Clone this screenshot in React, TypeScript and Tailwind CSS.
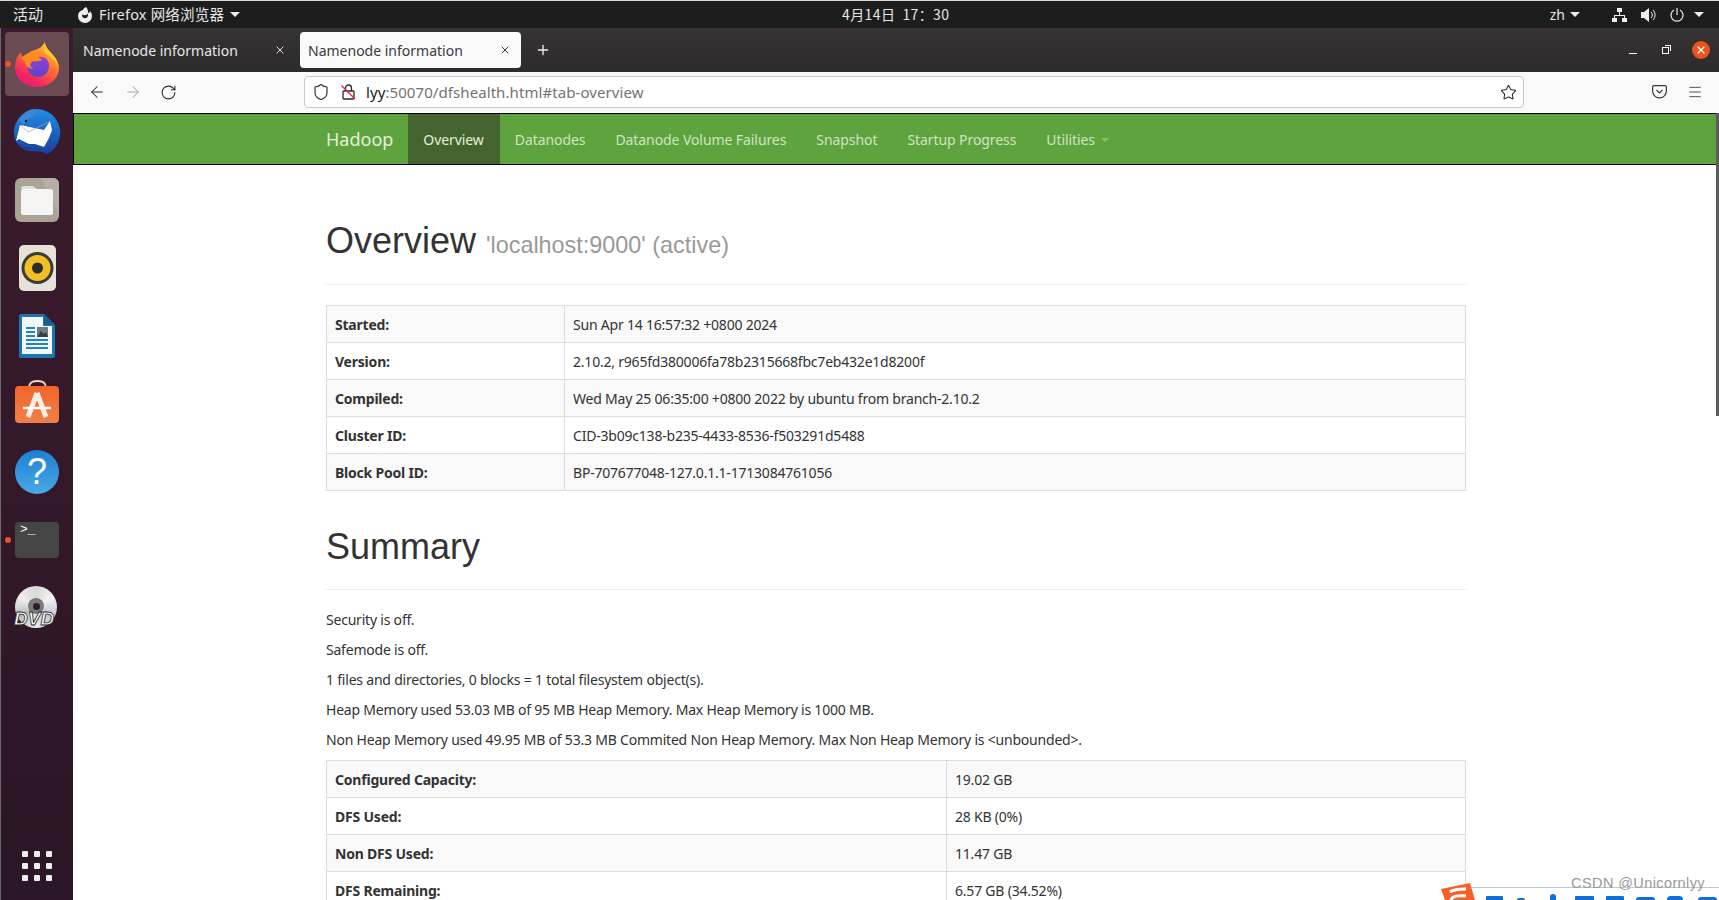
import { ArrowLeft, ArrowRight, Menu, Plus, RotateCw, Shield, Star, X } from "lucide-react";

const BODY_FONT = "font-['Noto_Sans','Noto_Sans_CJK_SC',sans-serif]";

function FirefoxIcon() {
  return (
    <svg width="44" height="46" viewBox="0 0 44 46">
      <defs>
        <linearGradient id="ffBody" x1="0.8" y1="0" x2="0.2" y2="1">
          <stop offset="0" stopColor="#ffd53a" />
          <stop offset="0.4" stopColor="#ff7a2b" />
          <stop offset="0.8" stopColor="#f5245f" />
          <stop offset="1" stopColor="#d81f86" />
        </linearGradient>
        <linearGradient id="ffBall" x1="0.5" y1="0" x2="0.5" y2="1">
          <stop offset="0" stopColor="#9a3fd8" />
          <stop offset="1" stopColor="#5a44c8" />
        </linearGradient>
      </defs>
      <path d="M30 0c-1 5 2 8 6 12 5 5 8 10 8 15 0 11-10 19-22 19S0 38 0 26c0-6 2-11 6-15 0 3 1 5 3 6 2-4 6-7 11-8 3-1 8-3 10-9z" fill="url(#ffBody)" />
      <circle cx="23" cy="25" r="11" fill="url(#ffBall)" />
      <path d="M6 17c4-4 9-6 14-6 6 0 12 3 14 9-3-3-7-5-11-4 3 1 4 3 4 3-3 2-9 0-11 3-2 2 0 5 3 6-5 0-9-3-9-7l-4-4z" fill="#ff8a1f" />
      <path d="M30 2c1 5 5 8 8 12 3 3 5 7 5 12-2-6-6-10-11-12-3-3-4-7-2-12z" fill="#ffc928" />
    </svg>
  );
}

function ThunderbirdIcon() {
  return (
    <svg width="48" height="48" viewBox="0 0 48 48">
      <defs>
        <linearGradient id="tbBody" x1="0.5" y1="0" x2="0.5" y2="1">
          <stop offset="0" stopColor="#1f8fe6" />
          <stop offset="1" stopColor="#173f9c" />
        </linearGradient>
      </defs>
      <path d="M24 1a23.500 23.500 0 0 1 22 31c-2 6-6 11-12 14l-4-2-7-1C10 45 1 36 1 25 1 12 11 1 24 1z" fill="url(#tbBody)" />
      <path d="M6 12C10 5 16 1 22 1c3 3 1 6-3 8-5 2-7 4-8 8z" fill="#3b86d6" />
      <path d="M7 17 31 22 37 13 39 22 36 30 31 39 22 36 16 36 6 31 3 33z" fill="#fff" />
      <path d="M7 17 15 24 36 14" fill="none" stroke="#9aa5b5" strokeWidth="0.7" />
      <path d="M3 33c4 5 10 7 17 7-3 3-14 0-17-7z" fill="#1b3f92" />
      <circle cx="13" cy="13" r="1.2" fill="#1a1a2a" />
    </svg>
  );
}

function FilesIcon() {
  return (
    <svg width="44" height="44" viewBox="0 0 44 44">
      <rect width="44" height="44" rx="6" fill="#a9a496" />
      <path d="M26 0h12a6 6 0 0 1 6 6v30z" fill="#b4afa2" />
      <path d="M6 11a3 3 0 0 1 3-3h9l4 3h-16z" fill="#e4e1da" />
      <rect x="6" y="11" width="32" height="26" rx="2.5" fill="#f6f5f3" />
    </svg>
  );
}

function RhythmboxIcon() {
  return (
    <svg width="37" height="46" viewBox="0 0 37 46">
      <rect width="37" height="46" rx="5" fill="#e6e2d8" />
      <circle cx="18.500" cy="23" r="16" fill="#3b3a38" />
      <circle cx="18.500" cy="23" r="13" fill="#f0c024" />
      <circle cx="18.500" cy="23" r="5.500" fill="#2d2c2a" />
    </svg>
  );
}

function WriterIcon() {
  return (
    <svg width="36" height="44" viewBox="0 0 36 44">
      <path d="M2 0h23l11 11v31a2 2 0 0 1-2 2H2a2 2 0 0 1-2-2V2a2 2 0 0 1 2-2z" fill="#1b76ad" />
      <path d="M3 3h21v9h9v28H3z" fill="#f3f6f8" />
      <path d="M25 0l11 11H25z" fill="#14608f" />
      <path d="M7 18h9M7 22h9M7 26h22M7 30h22M7 34h22M7 14h9" stroke="#1f86c4" strokeWidth="1.8" />
      <rect x="18" y="13" width="11" height="10" fill="#6f7c86" />
      <path d="M18 23l4-6 3 3 2-2 2 5z" fill="#33404a" />
    </svg>
  );
}

function SoftwareIcon() {
  return (
    <svg className="-translate-y-[3px]" width="44" height="43" viewBox="0 0 44 43">
      <defs>
        <linearGradient id="swBody" x1="0.5" y1="0" x2="0.5" y2="1">
          <stop offset="0" stopColor="#f2642a" />
          <stop offset="1" stopColor="#f08048" />
        </linearGradient>
      </defs>
      <path d="M14 8C14 2 18 1 23 1s8 2 8 7" fill="none" stroke="#f0d3b0" strokeWidth="1.800" />
      <rect y="6" width="44" height="37" rx="4" fill="url(#swBody)" />
      <path d="M22 13 13 37M22 13l9 24" stroke="#fbeee6" strokeWidth="5" />
      <path d="M8 28h28" stroke="#fff" strokeWidth="2.500" />
    </svg>
  );
}

function DvdIcon() {
  return (
    <div className="relative h-[44px] w-[44px]">
      <div className="h-[42px] w-[42px] rounded-full bg-[conic-gradient(#d8d8d8,#f2f2f2,#c8c2d8,#e8e8e8,#bcbcbc,#ededed,#d8d8d8)]" />
      <div className="absolute left-[13px] top-[12px] flex h-[16px] w-[16px] items-center justify-center rounded-full bg-[#7a7a7a]">
        <div className="h-[7px] w-[7px] rounded-full bg-[#2e1a28]" />
      </div>
      <span className="absolute -left-[1px] top-[24px] font-['Liberation_Sans',sans-serif] text-[19px] font-bold italic leading-[18px] text-white [-webkit-text-stroke:0.8px_#222]">
        DVD
      </span>
    </div>
  );
}

function DockItem({ children, active, dot }: { children: React.ReactNode; active?: boolean; dot?: boolean }) {
  return (
    <div className="relative flex h-[68px] w-full items-center justify-center">
      {active && <div className="absolute left-[4px] top-[2px] h-[64px] w-[64px] rounded-[4px] bg-[#6a4a53]" />}
      {dot && <div className="absolute left-[4px] top-[31px] h-[6px] w-[6px] rounded-full bg-[#e95420]" />}
      <div className="relative flex items-center justify-center">{children}</div>
    </div>
  );
}

function Dock() {
  return (
    <aside className="flex w-[73px] shrink-0 flex-col border-l border-[#6a6a6a] bg-gradient-to-b from-[#3c1b2e] to-[#2a1626] pt-[2px]">
      <DockItem active dot>
        <FirefoxIcon />
      </DockItem>
      <DockItem>
        <ThunderbirdIcon />
      </DockItem>
      <DockItem>
        <FilesIcon />
      </DockItem>
      <DockItem>
        <RhythmboxIcon />
      </DockItem>
      <DockItem>
        <WriterIcon />
      </DockItem>
      <DockItem>
        <SoftwareIcon />
      </DockItem>
      <DockItem>
        <div className="flex h-[44px] w-[44px] items-center justify-center rounded-full bg-gradient-to-b from-[#1c80d4] to-[#48a9e6] font-['Liberation_Sans',sans-serif] text-[36px] leading-none text-white">
          ?
        </div>
      </DockItem>
      <DockItem dot>
        <div className="h-[36px] w-[44px] rounded-[4px] bg-[#454545] px-[5px] font-['Liberation_Mono',monospace] text-[13px] leading-[16px] text-white">
          &gt;_
        </div>
      </DockItem>
      <DockItem>
        <DvdIcon />
      </DockItem>
      <div className="mt-auto grid h-[68px] grid-cols-[6px_6px_6px] content-center justify-center gap-[6px]">
        {[0, 1, 2, 3, 4, 5, 6, 7, 8].map((i) => (
          <div key={i} className="h-[6px] w-[6px] rounded-[1px] bg-[#eeeeee]" />
        ))}
      </div>
    </aside>
  );
}

function Caret() {
  return <span className="block h-0 w-0 border-x-[5px] border-t-[5px] border-x-transparent border-t-[#eeeeee]" />;
}

function TopBar() {
  return (
    <header className={`relative flex h-[28px] shrink-0 items-center border-t border-[#dcdcdc] bg-[#1d1d1d] text-[14px] text-[#e6e6e6] ${BODY_FONT}`}>
      <span className="ml-[13px] font-['Noto_Sans_CJK_SC',sans-serif] text-[15px]">活动</span>
      <svg className="ml-[34px]" width="16" height="16" viewBox="0 0 16 16">
        <path d="M9 0C7 1 6 2 6 3 3 3.500 1 6 1 9a7 7 0 0 0 14 0c0-2-1-4-2-5 0 1-1 2-2 2 0-2 0-4-2-6z" fill="#eeeeee" />
        <path d="M5 8a3 3 0 1 0 5.500-1.500C10 8 8 8.500 7 8c-.5-.3-1-.5-2 0z" fill="#1d1d1d" />
      </svg>
      <span className="ml-[6px] text-[14.500px] tracking-[0.2px]">Firefox 网络浏览器</span>
      <span className="ml-[6px]">
        <Caret />
      </span>
      <span className="absolute left-[842px] whitespace-pre font-['Noto_Sans_CJK_SC',sans-serif] text-[14px] tracking-[0.4px]">4月14日  17：30</span>
      <div className="ml-auto flex items-center">
        <span className="text-[14px]">zh</span>
        <span className="ml-[5px] mr-[32px]">
          <Caret />
        </span>
        <svg width="15" height="14" viewBox="0 0 15 14" fill="#eeeeee">
          <rect x="5" y="0" width="5" height="4" />
          <rect x="0" y="10" width="5" height="4" />
          <rect x="10" y="10" width="5" height="4" />
          <path d="M7 4h1v3h5v3h-1V8H3v2H2V7h5z" />
        </svg>
        <svg className="ml-[14px]" width="15" height="14" viewBox="0 0 15 14" fill="#eeeeee">
          <path d="M0 4h3l5-4v14l-5-4H0z" />
          <path d="M10 4a4 4 0 0 1 0 6M12 2a7 7 0 0 1 0 10" fill="none" stroke="#eeeeee" />
        </svg>
        <svg className="ml-[14px]" width="14" height="14" viewBox="0 0 14 14" fill="none" stroke="#eeeeee" strokeWidth="1.200">
          <path d="M7 0v7" />
          <path d="M4 2a6 6 0 1 0 6 0" />
        </svg>
        <span className="ml-[10px] mr-[15px]">
          <Caret />
        </span>
      </div>
    </header>
  );
}

function TabBar() {
  return (
    <div className={`flex h-[44px] shrink-0 items-center bg-gradient-to-b from-[#353334] to-[#2c2a2b] pl-[10px] text-[14px] ${BODY_FONT}`}>
      <div className="flex h-[39px] w-[211px] items-center justify-between pr-[8px] text-[#e8e8e8]">
        <span>Namenode information</span>
        <X size={12} />
      </div>
      <div className="ml-[6px] flex h-[36px] w-[221px] items-center justify-between rounded-[4px] bg-[#f9f9fa] pl-[8px] pr-[10px] text-[#3a3a3a]">
        <span>Namenode information</span>
        <X size={12} />
      </div>
      <Plus className="ml-[14px] text-[#eeeeee]" size={16} />
      <div className="ml-auto flex items-center pr-[9px] text-white">
        <div className="h-[1px] w-[8px] translate-y-[3px] bg-white" />
        <div className="relative ml-[25px] h-[7px] w-[7px] border border-white">
          <div className="absolute -right-[3px] -top-[3px] h-[6px] w-[6px] border-r border-t border-white" />
        </div>
        <div className="ml-[23px] flex h-[18px] w-[18px] items-center justify-center rounded-full bg-[#e95420]">
          <X size={12} strokeWidth={2.5} />
        </div>
      </div>
    </div>
  );
}

function Toolbar() {
  return (
    <div className={`flex h-[40px] shrink-0 items-center bg-[#f9f9fa] ${BODY_FONT}`}>
      <ArrowLeft className="ml-[15px] text-[#2a2a2e]" size={18} strokeWidth={1.4} />
      <ArrowRight className="ml-[18px] text-[#aaaaac]" size={18} strokeWidth={1.4} />
      <RotateCw className="ml-[18px] text-[#2a2a2e]" size={17} strokeWidth={1.5} />
      <div className="ml-[127px] flex h-[32px] w-[1220px] items-center rounded-[4px] border border-[#c8c8ca] bg-white pl-[7px] pr-[6px]">
        <Shield size={18} strokeWidth={1.5} className="text-[#2a2a2e]" />
        <svg className="ml-[11px]" width="15" height="16" viewBox="0 0 15 16" fill="none">
          <rect x="2" y="7" width="11" height="8" rx="1" stroke="#2a2a2e" strokeWidth="1.300" />
          <path d="M4.500 7V4a3 3 0 0 1 6 0v3" stroke="#2a2a2e" strokeWidth="1.300" />
          <path d="M0.500 1.500 14 15" stroke="#e0245e" strokeWidth="1.500" />
        </svg>
        <span className="ml-[10px] text-[15px] tracking-[0.08px] text-[#737373]">
          <span className="text-[#1a1a1a]">lyy</span>:50070/dfshealth.html#tab-overview
        </span>
        <Star className="ml-auto text-[#2a2a2e]" size={17} strokeWidth={1.5} />
      </div>
      <svg className="ml-[128px]" width="15" height="14" viewBox="0 0 15 14" fill="none" stroke="#3a3a3a" strokeWidth="1.200">
        <path d="M2 0.600h11a1.400 1.400 0 0 1 1.400 1.400v4a6.900 6.900 0 0 1-13.800 0V2A1.400 1.400 0 0 1 2 .6z" />
        <path d="M4.500 5l3 3 3-3" />
      </svg>
      <Menu className="ml-[20px] text-[#3a3a3a]" size={16} strokeWidth={1.3} />
    </div>
  );
}

const NAV = ["Datanodes", "Datanode Volume Failures", "Snapshot", "Startup Progress"];

function Navbar() {
  return (
    <nav className="mt-px flex h-[52px] shrink-0 border border-r-0 border-black bg-[#5fa33e] pb-[1px] pl-[252px] pt-[2px] tracking-[-0.08px]">
      <a className="-mb-[1px] -mt-[2px] flex items-center pr-[15px] text-[18px] tracking-normal text-[#e4efdc]">Hadoop</a>
      <a className="-mb-[1px] -mt-[2px] flex items-center bg-[#43642f] pb-[1px] pl-[15px] pr-[16px] pt-[2px] text-[#e4efdc]">Overview</a>
      {NAV.map((n) => (
        <a key={n} className="flex items-center px-[15px] text-[#cfe3c2]">
          {n}
        </a>
      ))}
      <a className="flex items-center gap-[6px] px-[15px] text-[#cfe3c2]">
        Utilities
        <span className="block h-0 w-0 border-x-[4px] border-t-[4px] border-x-transparent border-t-[#8fbc78]" />
      </a>
    </nav>
  );
}

function InfoTable({ rows, split }: { rows: [string, string][]; split: string }) {
  return (
    <table className="w-full table-fixed border-collapse border border-[#dddddd]">
      <colgroup>
        <col className={split} />
        <col />
      </colgroup>
      <tbody>
        {rows.map(([k, v], i) => (
          <tr key={k} className={i % 2 === 0 ? "bg-[#f9f9f9]" : "bg-white"}>
            <th className="h-[37px] border border-[#dddddd] px-[8px] pt-[1px] text-left font-bold">{k}</th>
            <td className="h-[37px] border border-[#dddddd] px-[8px] pt-[1px]">{v}</td>
          </tr>
        ))}
      </tbody>
    </table>
  );
}

function Heading({ title, sub, className }: { title: string; sub?: string; className: string }) {
  return (
    <div className={`mb-[20px] border-b border-[#eeeeee] ${className}`}>
      <h1 className="font-['Liberation_Sans',sans-serif] text-[36px] leading-[44px] tracking-normal">
        {title}
        {sub && <small className="ml-[10px] text-[23.400px] font-normal text-[#999999]">{sub}</small>}
      </h1>
    </div>
  );
}

function Page() {
  return (
    <main className={`min-h-0 flex-1 overflow-hidden bg-white text-[14px] leading-[20px] tracking-[-0.21px] text-[#333333] ${BODY_FONT}`}>
      <Navbar />
      <div className="ml-[253px] w-[1140px] pt-[54px]">
        <Heading title="Overview" sub="'localhost:9000' (active)" className="pb-[17px]" />
        <InfoTable
          split="w-[238px]"
          rows={[
            ["Started:", "Sun Apr 14 16:57:32 +0800 2024"],
            ["Version:", "2.10.2, r965fd380006fa78b2315668fbc7eb432e1d8200f"],
            ["Compiled:", "Wed May 25 06:35:00 +0800 2022 by ubuntu from branch-2.10.2"],
            ["Cluster ID:", "CID-3b09c138-b235-4433-8536-f503291d5488"],
            ["Block Pool ID:", "BP-707677048-127.0.1.1-1713084761056"],
          ]}
        />
        <div className="pt-[34px]">
          <Heading title="Summary" className="pb-[20px]" />
        </div>
        <div className="flex flex-col gap-[10px]">
          <p>Security is off.</p>
          <p>Safemode is off.</p>
          <p>1 files and directories, 0 blocks = 1 total filesystem object(s).</p>
          <p>Heap Memory used 53.03 MB of 95 MB Heap Memory. Max Heap Memory is 1000 MB.</p>
          <p>Non Heap Memory used 49.95 MB of 53.3 MB Commited Non Heap Memory. Max Non Heap Memory is &lt;unbounded&gt;.</p>
        </div>
        <div className="mt-[10px]">
          <InfoTable
            split="w-[620px]"
            rows={[
              ["Configured Capacity:", "19.02 GB"],
              ["DFS Used:", "28 KB (0%)"],
              ["Non DFS Used:", "11.47 GB"],
              ["DFS Remaining:", "6.57 GB (34.52%)"],
            ]}
          />
        </div>
      </div>
    </main>
  );
}

// tops of the toolbar icons that show under the CSDN line
const BLUE_MARKS = [
  "left-[46px] h-[4px] w-[17px] rounded-t-[1px]",
  "left-[77px] h-[2px] w-[8px] rounded-t-[3px]",
  "left-[110px] h-[6px] w-[6px] rounded-t-[3px]",
  "left-[135px] h-[4px] w-[19px] rounded-t-[1px]",
  "left-[166px] h-[4px] w-[18px] rounded-t-[1px]",
  "left-[196px] h-[3px] w-[19px] rounded-t-[8px]",
  "left-[227px] h-[4px] w-[16px] rounded-t-[4px]",
  "left-[258px] h-[3px] w-[19px] rounded-t-[8px]",
];

function CsdnOverlay() {
  return (
    <div className="absolute bottom-0 right-0 h-[17px] w-[279px]">
      <div className="absolute bottom-0 left-[30px] right-0 top-[4px] border-t border-[#b9c7dc] bg-white" />
      <svg className="absolute left-0 top-0" width="36" height="17" viewBox="0 0 36 17">
        <path d="M1 6 30 0l5 17H5z" fill="#f4622a" />
        <path d="M10 9c4-3 10-3 16-3M11 17c1-4 8-5 15-4" fill="none" stroke="#fff" strokeWidth="3" />
      </svg>
      {BLUE_MARKS.map((m) => (
        <div key={m} className={`absolute bottom-0 bg-[#0f6fd6] ${m}`} />
      ))}
      <span className="absolute -top-[8px] right-[14px] font-['Liberation_Sans',sans-serif] text-[14.500px] leading-[17px] tracking-[0.4px] text-[#999999]">
        CSDN @Unicornlyy
      </span>
    </div>
  );
}

export default function App() {
  return (
    <div className="relative flex h-screen w-full flex-col overflow-hidden bg-white">
      <TopBar />
      <div className="flex min-h-0 flex-1">
        <Dock />
        <div className="flex min-w-0 flex-1 flex-col">
          <TabBar />
          <Toolbar />
          <Page />
        </div>
      </div>
      <div className="absolute right-0 top-[113px] h-[303px] w-[3px] bg-[#5c5c5c]" />
      <CsdnOverlay />
    </div>
  );
}
